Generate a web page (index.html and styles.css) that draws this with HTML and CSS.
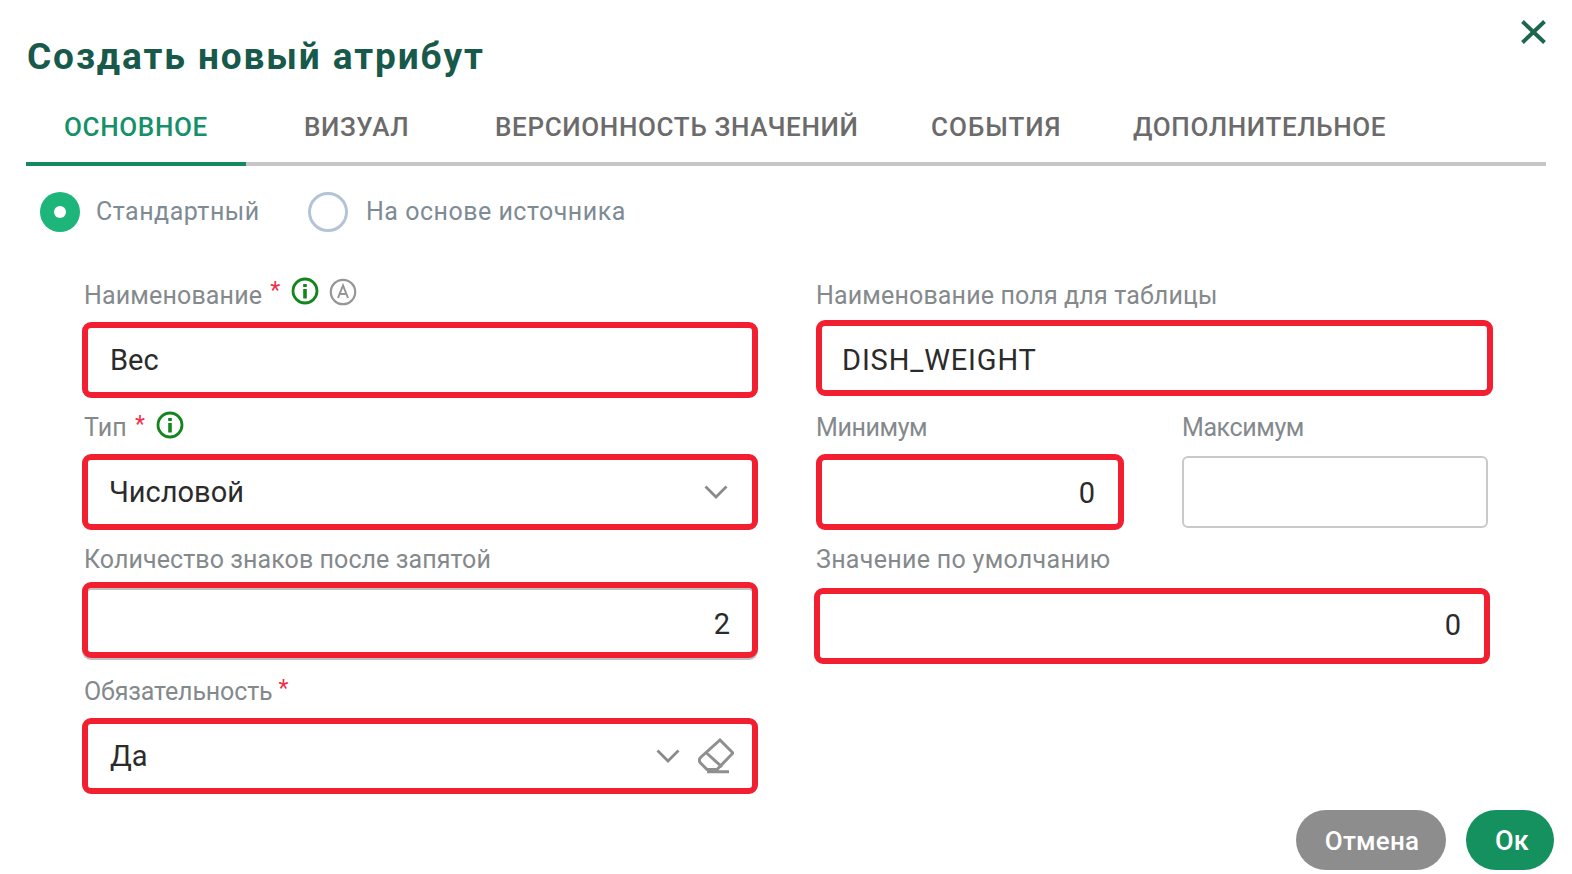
FILE: index.html
```html
<!DOCTYPE html>
<html lang="ru">
<head>
<meta charset="utf-8">
<title>Создать новый атрибут</title>
<link rel="stylesheet" href="styles.css">
</head>
<body>
<div class="dialog">
  <header class="head">
    <h1 class="title">Создать новый атрибут</h1>
    <button class="close" aria-label="Закрыть">
      <svg viewBox="0 0 25 24" width="25" height="24"><path d="M1.500 1.500 23.500 22.500M23.500 1.500 1.500 22.500" fill="none" stroke="#1f6650" stroke-width="4"/></svg>
    </button>
  </header>
  <nav class="tabs">
    <a class="tab tab-active tab-1">ОСНОВНОЕ</a>
    <a class="tab tab-2">ВИЗУАЛ</a>
    <a class="tab tab-3">ВЕРСИОННОСТЬ ЗНАЧЕНИЙ</a>
    <a class="tab tab-4">СОБЫТИЯ</a>
    <a class="tab tab-5">ДОПОЛНИТЕЛЬНОЕ</a>
  </nav>
  <div class="radios">
    <span class="radio radio-on"></span><span class="radio-label label-std">Стандартный</span>
    <span class="radio radio-off"></span><span class="radio-label">На основе источника</span>
  </div>
  <div class="form">
    <div class="col col-left">
      <div class="field">
        <div class="label lb-16">Наименование <i class="req req-first">*</i>
          <svg class="ico ico-i ico-first" viewBox="0 0 28 28" width="28" height="28"><circle cx="14" cy="14" r="12" fill="none" stroke="#12861d" stroke-width="2.800"/><path d="M14 7v3M14 12v9.500" stroke="#12861d" stroke-width="3.600" fill="none"/></svg>
          <svg class="ico ico-a ico-first" viewBox="0 0 28 28" width="28" height="28"><circle cx="14" cy="14" r="12.200" fill="none" stroke="#969696" stroke-width="2.200"/><path d="M9 20 14 7.500 19 20M10.600 16h6.800" stroke="#969696" stroke-width="2" fill="none"/></svg>
        </div>
        <div class="box box-text box-inset">Вес</div>
      </div>
      <div class="field mt-16">
        <div class="label lb-16">Тип <i class="req">*</i>
          <svg class="ico ico-i" viewBox="0 0 28 28" width="28" height="28"><circle cx="14" cy="14" r="12" fill="none" stroke="#12861d" stroke-width="2.800"/><path d="M14 7v3M14 12v9.500" stroke="#12861d" stroke-width="3.600" fill="none"/></svg>
        </div>
        <div class="box box-text box-select">Числовой
          <svg class="chev" viewBox="0 0 24 14" width="24" height="14"><path d="M1.500 1.500 12 12 22.500 1.500" fill="none" stroke="#8a8a8a" stroke-width="2.800"/></svg>
        </div>
      </div>
      <div class="field mt-16">
        <div class="label lb-count lb-12">Количество знаков после запятой</div>
        <div class="box box-num box-shadow">2</div>
      </div>
      <div class="field mt-20">
        <div class="label lb-narrow lb-16">Обязательность<i class="req req-tight">*</i></div>
        <div class="box box-text box-select box-inset">Да
          <span class="actions">
            <svg class="chev" viewBox="0 0 24 14" width="24" height="14"><path d="M1.500 1.500 12 12 22.500 1.500" fill="none" stroke="#8a8a8a" stroke-width="2.800"/></svg>
            <svg class="eraser" viewBox="0 0 36 36" width="36" height="36"><path d="M22 2 35 15 19 31.500H9L2.500 25C1 23.500 1 21 2.500 19.500ZM8 14.500 24 29M9 33.800H31" fill="none" stroke="#8f8f8f" stroke-width="3"/></svg>
          </span>
        </div>
      </div>
    </div>
    <div class="col col-right">
      <div class="field">
        <div class="label lb-14">Наименование поля для таблицы</div>
        <div class="box box-text box-code ml-2">DISH_WEIGHT</div>
      </div>
      <div class="pair mt-18">
        <div class="field field-min">
          <div class="label label-flush lb-tight lb-16">Минимум</div>
          <div class="box box-num box-min">0</div>
        </div>
        <div class="field field-max">
          <div class="label label-flush lb-tight lb-18">Максимум</div>
          <div class="box box-plain"></div>
        </div>
      </div>
      <div class="field mt-16">
        <div class="label lb-wide lb-18">Значение по умолчанию</div>
        <div class="box box-num box-default">0</div>
      </div>
    </div>
  </div>
  <footer class="foot">
    <button class="btn btn-cancel">Отмена</button>
    <button class="btn btn-ok">Ок</button>
  </footer>
</div>
</body>
</html>
```

FILE: styles.css
```css
* { box-sizing: border-box; }
html, body { margin: 0; padding: 0; background: #fff; }
body { font-family: Roboto, "Noto Sans", sans-serif; width: 1572px; height: 874px; overflow: hidden; }
.dialog { height: 874px; padding: 20px 18px 0 26px; display: flex; flex-direction: column; }
.head { display: flex; justify-content: space-between; align-items: flex-start; height: 76px; }
.title { margin: 14px 0 0 1px; font-size: 37px; line-height: 46px; font-weight: 700; letter-spacing: 1.900px; color: #17594a; white-space: nowrap; }
.close { border: 0; background: none; padding: 0; margin: 0 8px 0 0; width: 25px; height: 24px; display: block; }
.close svg { display: block; }

.tabs { display: flex; height: 70px; border-bottom: 4px solid #c6c6c6; width: 1520px; }
.tab { height: 70px; flex: none; display: block; padding-top: 15px; font-size: 26px; line-height: 32px; font-weight: 500; letter-spacing: .65px; color: #6b6b6b; white-space: nowrap; }
.tab-active { color: #15906a; border-bottom: 4px solid #148a62; }
.tab-1 { width: 220px; padding-left: 38px; }
.tab-2 { width: 249px; padding-left: 58px; }
.tab-3 { width: 436px; }
.tab-4 { width: 202px; letter-spacing: 1px; }
.tab-5 { width: 260px; }

.radios { display: flex; align-items: center; height: 40px; margin-top: 26px; padding-left: 14px; }
.radio { width: 40px; height: 40px; border-radius: 50%; flex: none; }
.radio-on { background: #1eb57a; position: relative; }
.radio-on::after { content: ""; position: absolute; left: 14px; top: 14px; width: 12px; height: 12px; border-radius: 50%; background: #fff; }
.radio-off { border: 3px solid #b4c3d8; }
.radio-label { margin-left: 16px; font-size: 25px; line-height: 40px; letter-spacing: .5px; color: #7e8b94; white-space: nowrap; }
.label-std { width: 212px; }
.radio-off + .radio-label { margin-left: 18px; }

.form { display: flex; margin-top: 50px; padding-left: 56px; }
.col-left { width: 676px; flex: none; }
.col-right { width: 679px; flex: none; margin-left: 56px; }
.mt-16 { margin-top: 16px; }
.mt-18 { margin-top: 18px; }
.mt-20 { margin-top: 20px; }
.ml-2 { margin-left: 2px; }

.label { height: 24px; padding-left: 2px; padding-top: 4px; font-size: 25px; line-height: 24px; letter-spacing: .15px; color: #84898c; white-space: nowrap; display: flex; align-items: center; }
.label-flush { padding-left: 0; }
.lb-tight { letter-spacing: -.4px; }
.lb-wide { letter-spacing: .3px; }
.lb-count { letter-spacing: .08px; }
.lb-narrow { letter-spacing: -.15px; }
.lb-12 { margin-bottom: 12px; }
.lb-14 { margin-bottom: 14px; }
.lb-16 { margin-bottom: 16px; }
.lb-18 { margin-bottom: 18px; }
.req { font-style: normal; color: #f0304a; margin-left: 8px; font-size: 23px; position: relative; top: -3px; }
.req-first { top: -5px; }
.req-tight { margin-left: 6px; }
.ico { flex: none; margin-left: 11px; position: relative; top: -3px; }
.ico-a { margin-left: 10px; }
.ico-first { top: -5px; }
.ico-a.ico-first { top: -4px; }

.box { height: 76px; border: 6px solid #f11f30; border-radius: 9px; background: #fff; display: flex; align-items: center; font-size: 29px; color: #2b2b2b; white-space: nowrap; }
.box-text { padding-left: 21px; }
.box-inset { padding-left: 22px; }
.box-code { padding-left: 20px; padding-top: 3px; letter-spacing: .85px; }
.box-select { justify-content: space-between; padding-right: 24px; }
.box-num { justify-content: flex-end; padding-top: 1px; padding-right: 22px; }
.box-min { padding-right: 23px; }
.box-default { margin-right: 3px; padding-right: 23px; padding-top: 0; padding-bottom: 2px; }
.box-shadow { padding-top: 7px; box-shadow: inset 0 2px 0 #c0c0c0, 0 2px 0 #c0c0c0; }
.box-plain { height: 72px; margin-top: 2px; border: 2px solid #c9c9c9; border-radius: 6px; }
.actions { display: flex; align-items: center; gap: 18px; margin-right: -6px; }
.chev, .eraser { display: block; flex: none; }

.pair { display: flex; margin-left: 2px; }
.field-min { width: 308px; flex: none; }
.field-max { width: 306px; flex: none; margin-left: 58px; }

.foot { margin-top: auto; display: flex; justify-content: flex-end; gap: 20px; height: 64px; }
.btn { height: 60px; border: 0; border-radius: 30px; color: #fff; font-family: inherit; font-size: 26px; font-weight: 500; letter-spacing: .2px; padding: 2px 0 0 2px; }
.btn-cancel { width: 150px; background: #8d8d8d; }
.btn-ok { width: 88px; background: #159160; font-size: 27px; padding-left: 4px; }
```
